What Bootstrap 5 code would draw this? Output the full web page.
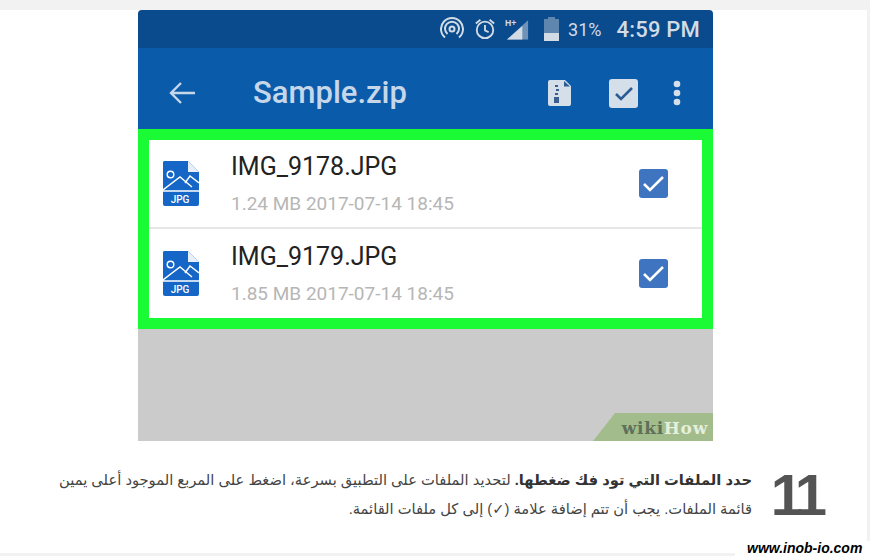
<!DOCTYPE html>
<html lang="ar">
<head>
    <meta charset="UTF-8">
    <meta name="viewport" content="width=device-width, initial-scale=1.0">
    <title>wikiHow step 11</title>
    <link href="https://cdn.jsdelivr.net/npm/bootstrap@5.3.0/dist/css/bootstrap.min.css" rel="stylesheet">
    <style>
        html, body { height: 100%; }
        body {
            background-color: #f2f2f2;
            overflow: hidden;
            position: relative;
        }
        .page-panel {
            width: 867px;
            height: 543px;
            margin-top: 10px;
            background: #fff;
        }
        .shot {
            width: 575px;
            height: 431px;
            margin-left: 138px;
            background: #cbcbcb;
            position: relative;
            overflow: hidden;
            border-radius: 4px 4px 0 0;
        }
        .status-bar {
            height: 38px;
            background: #0a4b8d;
            color: #d3dbe5;
            font-family: Roboto, sans-serif;
            padding-right: 13px;
        }
        .status-radio { margin-right: 10px; }
        .status-alarm { margin-right: 9px; }
        .status-signal { margin-right: 14px; }
        .status-pct { font-size: 18px; margin-left: 9px; }
        .status-time { font-size: 22px; font-weight: 500; margin-left: 15px; letter-spacing: .2px; }
        .app-bar {
            height: 81px;
            padding: 9px 31px 0 31px;
            background: #0a5cab;
            color: #c6d7ea;
        }
        .app-back { margin-right: 57px; }
        .app-title { font-family: Roboto, sans-serif; font-size: 31px; font-weight: 500; }
        .app-zip { margin-right: 38px; }
        .app-check { margin-right: 34px; }
        .file-box {
            border: 11px solid #1bfb35;
            background: #fff;
            height: 200px;
        }
        .file-row { height: 87px; padding: 0 34px 0 14px; }
        .file-row + .file-row { height: 90px; padding-top: 1px; border-top: 2px solid #e6e6e6; }
        .file-name { font-family: Roboto, sans-serif; font-size: 25px; color: #222; line-height: 30px; }
        .file-meta { font-family: Roboto, sans-serif; font-size: 19px; color: #b6b6b6; line-height: 24px; margin-top: 10px; }
        .file-text { margin-left: 32px; }
        .tag-wm {
            position: absolute;
            right: 0;
            bottom: 0;
            width: 120px;
            height: 28px;
            background: #a2bd8b;
            clip-path: polygon(22px 0, 100% 0, 100% 100%, 0 100%);
            font-family: "DejaVu Serif", serif;
            font-weight: 700;
            font-size: 17px;
            line-height: 30px;
            text-align: right;
            padding-right: 5px;
            letter-spacing: .7px;
        }
        .tag-wm b { color: #5f6f58; }
        .tag-wm span { color: #e6eedd; }
        .step-row { padding: 26px 45px 0 54px; }
        .step-num {
            font-family: "Liberation Sans", sans-serif;
            font-weight: 700;
            font-size: 58px;
            line-height: 56px;
            color: #545454;
            letter-spacing: -5px;
        }
        .step-text {
            font-family: "Liberation Sans", "DejaVu Sans", sans-serif;
            font-size: 14.7px;
            line-height: 29px;
            color: #444;
            width: 698px;
            margin-top: -1px;
        }
        .step-text strong { color: #333; }
        .site-wm {
            position: absolute;
            right: 0;
            bottom: 0;
            width: 135px;
            height: 15px;
            background: #fff;
            font-family: "Liberation Sans", sans-serif;
            font-weight: 700;
            font-style: italic;
            font-size: 14px;
            line-height: 15px;
            color: #000;
            padding-left: 12px;
        }
    </style>
</head>
<body>
    <div class="page-panel">
        <div class="shot">
            <div class="status-bar d-flex align-items-center justify-content-end">
                <svg class="status-radio" width="24" height="24" viewBox="0 0 24 24" fill="none" stroke="#d3dbe5" stroke-width="2"><circle cx="12" cy="12" r="2.5"/><path d="M7.5 17a7 7 0 1 1 9 0M5 20.5a11 11 0 1 1 14 0"/></svg>
                <svg class="status-alarm" width="22" height="24" viewBox="0 0 24 26" fill="none" stroke="#d3dbe5" stroke-width="2"><circle cx="12" cy="14" r="9"/><path d="M12 8.5v6l4 2M2 7l5-4M22 7l-5-4"/></svg>
                <svg class="status-signal" width="25" height="24" viewBox="0 0 26 24"><path d="M2 23 24 3v20z" fill="#6f93b8"/><path d="M2 23 18 9v14z" fill="#d3dbe5"/><text x="0" y="9" font-family="Liberation Sans, sans-serif" font-size="9" font-weight="700" fill="#d3dbe5">H+</text></svg>
                <svg width="15" height="24" viewBox="0 0 15 24"><path d="M4 0h7v2h4v22H0V2h4z" fill="#5f86ae"/><rect y="16" width="15" height="8" fill="#d3dbe5"/></svg>
                <span class="status-pct">31%</span>
                <span class="status-time">4:59 PM</span>
            </div>
            <div class="app-bar d-flex align-items-center">
                <svg class="app-back" width="27" height="24" viewBox="0 0 27 24" fill="none" stroke="#c6d7ea" stroke-width="2.4"><path d="M26 12H2M12 2 2 12l10 10"/></svg>
                <span class="app-title">Sample.zip</span>
                <svg class="app-zip ms-auto" width="23" height="26" viewBox="0 0 23 26"><path d="M2 0h15l6 6v18a2 2 0 0 1-2 2H2a2 2 0 0 1-2-2V2a2 2 0 0 1 2-2z" fill="#d5dfea"/><path d="M16 1v5.500h6z" fill="#2b5b94"/><path d="M7 5h3v2H7zM8 9h3v2H8zM7 13h3v2H7zM6 17h5v6H6z" fill="#3a5f8c"/></svg>
                <svg class="app-check" width="29" height="29" viewBox="0 0 29 29"><rect width="29" height="29" rx="3" fill="#d5dfea"/><path d="M7 15l5 5L23 9" fill="none" stroke="#2b5b94" stroke-width="2.6"/></svg>
                <svg width="10" height="26" viewBox="0 0 10 26" fill="#d5dfea"><circle cx="5" cy="4" r="3.300"/><circle cx="5" cy="13" r="3.300"/><circle cx="5" cy="22" r="3.300"/></svg>
            </div>
            <div class="file-box">
                <div class="file-row d-flex align-items-center">
                    <svg width="36" height="45" viewBox="0 0 36 45"><path d="M1 0h24l11 11v32a2 2 0 0 1-2 2H2a2 2 0 0 1-2-2V1z" fill="#1566c6"/><path d="M25 0v11h11z" fill="#e7effa"/><circle cx="7.500" cy="13.500" r="3.300" fill="none" stroke="#fff" stroke-width="1.400"/><path d="M0 29l17-13 12 10M22 22l5-7 9 7M0 30h36" fill="none" stroke="#fff" stroke-width="1.400"/><text x="17" y="41.500" text-anchor="middle" font-family="Roboto, sans-serif" font-size="10" font-weight="500" fill="#fff">JPG</text></svg>
                    <div class="file-text">
                        <div class="file-name">IMG_9178.JPG</div>
                        <div class="file-meta">1.24 MB 2017-07-14 18:45</div>
                    </div>
                    <svg class="ms-auto" width="29" height="29" viewBox="0 0 29 29"><rect width="29" height="29" rx="3" fill="#3f74c0"/><path d="M5 15l6 6L24 8" fill="none" stroke="#fff" stroke-width="2.600"/></svg>
                </div>
                <div class="file-row d-flex align-items-center">
                    <svg width="36" height="45" viewBox="0 0 36 45"><path d="M1 0h24l11 11v32a2 2 0 0 1-2 2H2a2 2 0 0 1-2-2V1z" fill="#1566c6"/><path d="M25 0v11h11z" fill="#e7effa"/><circle cx="7.500" cy="13.500" r="3.300" fill="none" stroke="#fff" stroke-width="1.400"/><path d="M0 29l17-13 12 10M22 22l5-7 9 7M0 30h36" fill="none" stroke="#fff" stroke-width="1.400"/><text x="17" y="41.500" text-anchor="middle" font-family="Roboto, sans-serif" font-size="10" font-weight="500" fill="#fff">JPG</text></svg>
                    <div class="file-text">
                        <div class="file-name">IMG_9179.JPG</div>
                        <div class="file-meta">1.85 MB 2017-07-14 18:45</div>
                    </div>
                    <svg class="ms-auto" width="29" height="29" viewBox="0 0 29 29"><rect width="29" height="29" rx="3" fill="#3f74c0"/><path d="M5 15l6 6L24 8" fill="none" stroke="#fff" stroke-width="2.600"/></svg>
                </div>
            </div>
            <div class="tag-wm"><b>wiki</b><span>How</span></div>
        </div>
        <div class="step-row d-flex flex-row-reverse justify-content-between">
            <div class="step-num">11</div>
            <div class="step-text" dir="rtl"><strong>حدد الملفات التي تود فك ضغطها.</strong> لتحديد الملفات على التطبيق بسرعة، اضغط على المربع الموجود أعلى يمين قائمة الملفات. يجب أن تتم إضافة علامة (✓) إلى كل ملفات القائمة.</div>
        </div>
    </div>
    <div class="site-wm">www.inob-io.com</div>
</body>
</html>
